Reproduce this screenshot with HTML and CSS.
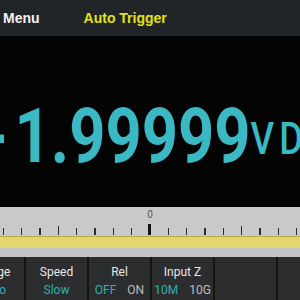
FILE: index.html
```html
<!DOCTYPE html>
<html lang="en">
<head>
    <meta charset="UTF-8">
    <meta name="viewport" content="width=device-width, initial-scale=1.0">
    <title>DMM Home</title>
    <link rel="stylesheet" href="styles.css">
</head>
<body>

    <div class="screen">
        <!-- Top bar -->
        <header class="topbar">
            <span class="menu">Menu</span>
            <span class="trigger">Auto Trigger</span>
        </header>

        <!-- Main reading -->
        <main class="display">
            <div class="readout">
                <span class="value"><span class="sign">-</span>1.99999</span>
                <span class="unit">VDC</span>
            </div>
        </main>

        <!-- Bar graph scale -->
        <div class="ruler">
            <span class="zero">0</span>
            <div class="ticks">
                <span class="tick"></span>
                <span class="tick"></span>
                <span class="tick"></span>
                <span class="tick major"></span>
                <span class="tick"></span>
                <span class="tick"></span>
                <span class="tick"></span>
                <span class="tick"></span>
                <span class="tick center"></span>
                <span class="tick"></span>
                <span class="tick"></span>
                <span class="tick"></span>
                <span class="tick"></span>
                <span class="tick major"></span>
                <span class="tick"></span>
                <span class="tick"></span>
                <span class="tick"></span>
            </div>
        </div>
        <div class="bargraph"></div>
        <div class="band"></div>

        <!-- Soft keys -->
        <footer class="softkeys">
            <div class="key">
                <span class="label">Range</span>
                <span class="opts"><span class="on">Auto</span></span>
            </div>
            <div class="key">
                <span class="label">Speed</span>
                <span class="opts"><span class="on">Slow</span></span>
            </div>
            <div class="key">
                <span class="label">Rel</span>
                <span class="opts"><span class="on">OFF</span><span class="off">ON</span></span>
            </div>
            <div class="key">
                <span class="label">Input Z</span>
                <span class="opts"><span class="on">10M</span><span class="off">10G</span></span>
            </div>
            <div class="key"></div>
        </footer>
    </div>

</body>
</html>
```

FILE: styles.css
```css
/* Osnova */
body {
    margin: 0;
    background: #050404;
    font-family: Roboto, 'Liberation Sans', sans-serif;
    overflow: hidden;
}

.screen {
    width: 300px;
    height: 300px;
    overflow: hidden;
}

/* Gornja traka */
.topbar {
    height: 36px;
    background: #222527;
    display: flex;
    align-items: center;
    padding-left: 3px;
    box-sizing: border-box;
    font-family: 'Liberation Sans', Arial, sans-serif;
    font-size: 14px;
    font-weight: bold;
}

.menu {
    color: #f2f2f2;
}

.trigger {
    color: #e4e21c;
    margin-left: 44px;
}

/* Prikaz mjerenja */
.display {
    height: 171px;
    box-sizing: border-box;
    padding-top: 62px;
    background: #050404;
}

.readout {
    display: flex;
    align-items: flex-start;
    margin-left: -17px;
    color: #3ab9c4;
    white-space: nowrap;
    transform: scaleX(0.832);
    transform-origin: left top;
}

.value {
    font-size: 76px;
    line-height: 76px;
    font-weight: bold;
}

.sign {
    margin-right: 8px;
}

.unit {
    font-size: 44px;
    line-height: 44px;
    font-weight: 500;
    letter-spacing: 6px;
    margin-top: 19px;
    margin-left: 0;
}

/* Skala */
.ruler {
    height: 28px;
    background: #c9c9c9;
    position: relative;
    display: flex;
    flex-direction: column;
    justify-content: flex-end;
    padding-bottom: 1px;
}

.zero {
    position: absolute;
    top: 2px;
    left: 0;
    right: 0;
    text-align: center;
    font-size: 10px;
    color: #5a5a5a;
}

.ticks {
    display: flex;
    align-items: flex-end;
    width: 311.67px;
    margin-left: -5.83px;
}

.tick {
    flex: 1;
    height: 7px;
    display: flex;
    justify-content: center;
}

.tick::after {
    content: "";
    width: 1.5px;
    background: #2b2b2b;
}

.tick.major {
    height: 9px;
}

.tick.center {
    height: 11px;
}

.tick.center::after {
    width: 3px;
    background: #111;
}

.bargraph {
    height: 11px;
    background: #e4d66c;
    border-top: 1px solid #b9a94a;
}

.band {
    height: 9px;
    background: #c4c4c7;
}

/* Tipke */
.softkeys {
    height: 44px;
    background: #2c2d2f;
    display: flex;
    margin-left: -37px;
}

.key {
    flex: 0 0 61px;
    border-right: 2px solid #141516;
    display: flex;
    flex-direction: column;
    align-items: center;
    padding-top: 8px;
    font-size: 12px;
    line-height: 14px;
}

.label {
    color: #e6e6e6;
}

.opts {
    display: flex;
    gap: 11px;
    margin-top: 4px;
}

.on {
    color: #2cb1ae;
}

.off {
    color: #bdbdbd;
}
```
